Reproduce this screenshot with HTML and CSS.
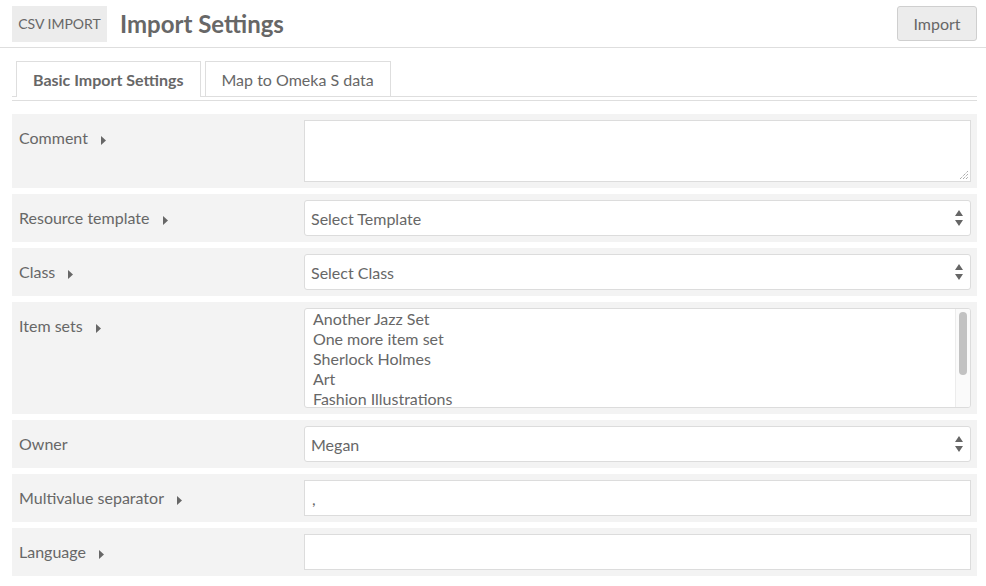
FILE: index.html
```html
<!DOCTYPE html>
<html>
<head>
<meta charset="utf-8">
<link rel="stylesheet" href="styles.css">
</head>
<body>
<header class="top">
  <div class="crumb">CSV IMPORT</div>
  <h1 class="title">Import Settings</h1>
  <button class="btn">Import</button>
</header>
<nav class="tabs">
  <div class="tab active">Basic Import Settings</div>
  <div class="tab">Map to Omeka S data</div>
</nav>
<div class="rule"></div>
<main class="form">
  <div class="row">
    <div class="label">Comment <svg class="caret" width="5" height="9" viewBox="0 0 5 9"><path d="M0 0 L5 4.5 L0 9 Z"/></svg></div>
    <div class="field"><div class="textarea"><svg class="grip" width="9" height="9" viewBox="0 0 9 9"><path d="M1 9 L9 1 M4 9 L9 4 M7 9 L9 7" stroke="#888" stroke-width="1" stroke-dasharray="1 1"/></svg></div></div>
  </div>
  <div class="row">
    <div class="label">Resource template <svg class="caret" width="5" height="9" viewBox="0 0 5 9"><path d="M0 0 L5 4.5 L0 9 Z"/></svg></div>
    <div class="field"><div class="select"><span>Select Template</span><svg class="arrows" width="8" height="16" viewBox="0 0 8 16"><path d="M4 0 L8 6 L0 6 Z M0 10 L8 10 L4 16 Z"/></svg></div></div>
  </div>
  <div class="row">
    <div class="label">Class <svg class="caret" width="5" height="9" viewBox="0 0 5 9"><path d="M0 0 L5 4.5 L0 9 Z"/></svg></div>
    <div class="field"><div class="select"><span>Select Class</span><svg class="arrows" width="8" height="16" viewBox="0 0 8 16"><path d="M4 0 L8 6 L0 6 Z M0 10 L8 10 L4 16 Z"/></svg></div></div>
  </div>
  <div class="row">
    <div class="label">Item sets <svg class="caret" width="5" height="9" viewBox="0 0 5 9"><path d="M0 0 L5 4.5 L0 9 Z"/></svg></div>
    <div class="field">
      <div class="listbox">
        <ul class="items">
          <li>Another Jazz Set</li>
          <li>One more item set</li>
          <li>Sherlock Holmes</li>
          <li>Art</li>
          <li>Fashion Illustrations</li>
        </ul>
        <div class="scrollbar"><div class="thumb"></div></div>
      </div>
    </div>
  </div>
  <div class="row">
    <div class="label">Owner</div>
    <div class="field"><div class="select"><span>Megan</span><svg class="arrows" width="8" height="16" viewBox="0 0 8 16"><path d="M4 0 L8 6 L0 6 Z M0 10 L8 10 L4 16 Z"/></svg></div></div>
  </div>
  <div class="row">
    <div class="label">Multivalue separator <svg class="caret" width="5" height="9" viewBox="0 0 5 9"><path d="M0 0 L5 4.5 L0 9 Z"/></svg></div>
    <div class="field"><div class="input">,</div></div>
  </div>
  <div class="row">
    <div class="label">Language <svg class="caret" width="5" height="9" viewBox="0 0 5 9"><path d="M0 0 L5 4.5 L0 9 Z"/></svg></div>
    <div class="field"><div class="input"></div></div>
  </div>
</main>
</body>
</html>
```
FILE: styles.css
```css
* { box-sizing: border-box; }
html, body { margin: 0; padding: 0; background: #fff; }
body {
  font-family: Lato, "Open Sans", sans-serif;
  color: #676767;
  font-size: 16px;
  width: 986px;
  overflow: hidden;
}
.top {
  display: flex;
  align-items: flex-start;
  height: 48px;
  padding: 6px 9px 0 12px;
  border-bottom: 1px solid #dedede;
}
.crumb {
  background: #ececec;
  height: 36px;
  width: 95px;
  line-height: 36px;
  font-size: 14px;
  text-align: center;
  color: #676767;
}
.title {
  margin: 0 0 0 13px;
  font-size: 24px;
  font-weight: 700;
  line-height: 36px;
  color: #676767;
  flex: 1;
}
.btn {
  font-family: inherit;
  font-size: 16px;
  color: #676767;
  background: #ececec;
  border: 1px solid #cfcfcf;
  border-radius: 3px;
  width: 80px;
  height: 35px;
  padding: 0;
}
.tabs {
  display: flex;
  gap: 4px;
  margin: 13px 9px 0 12px;
  padding-left: 4px;
  border-bottom: 1px solid #dedede;
}
.tab {
  height: 35px;
  line-height: 36px;
  padding: 0 16px;
  border: 1px solid #dedede;
  border-bottom: none;
  background: #fff;
  font-size: 16px;
}
.tab.active {
  font-weight: 700;
  padding: 0 16px;
  height: 36px;
  margin-bottom: -1px;
}
.rule {
  margin: 3px 9px 0 12px;
  border-top: 1px solid #dedede;
}
.form {
  margin: 13px 9px 0 12px;
  display: flex;
  flex-direction: column;
  gap: 6px;
}
.row {
  display: flex;
  background: #f3f3f3;
  padding: 6px 6px 6px 0;
}
.label {
  width: 292px;
  padding-left: 7px;
  line-height: 36px;
  font-size: 16px;
  flex: none;
}
.caret {
  fill: #676767;
  margin-left: 9px;
  vertical-align: -1px;
}
.field { flex: 1; }
.textarea {
  height: 62px;
  background: #fff;
  border: 1px solid #dcdcdc;
  display: flex;
  justify-content: flex-end;
  align-items: flex-end;
  padding: 0 2px 2px 0;
}
.grip { display: block; }
.select {
  height: 36px;
  background: #fff;
  border: 1px solid #dcdcdc;
  border-radius: 3px;
  display: flex;
  align-items: center;
  justify-content: space-between;
  padding: 0 7px 0 6px;
  font-size: 16px;
}
.arrows { fill: #666; display: block; }
.input {
  height: 36px;
  background: #fff;
  border: 1px solid #dcdcdc;
  padding: 0 7px;
  line-height: 36px;
  font-size: 16px;
}
.listbox {
  height: 100px;
  background: #fff;
  border: 1px solid #dcdcdc;
  border-radius: 3px;
  display: flex;
  overflow: hidden;
}
.items {
  flex: 1;
  list-style: none;
  margin: 0;
  padding: 0 0 0 8px;
  overflow: hidden;
}
.items li {
  line-height: 20px;
  font-size: 16px;
}
.scrollbar {
  width: 15px;
  flex: none;
  border-left: 1px solid #ececec;
  background: #fafafa;
  padding: 3px 3px 0 3px;
}
.thumb {
  height: 63px;
  background: #c2c2c2;
  border-radius: 4px;
}
```
